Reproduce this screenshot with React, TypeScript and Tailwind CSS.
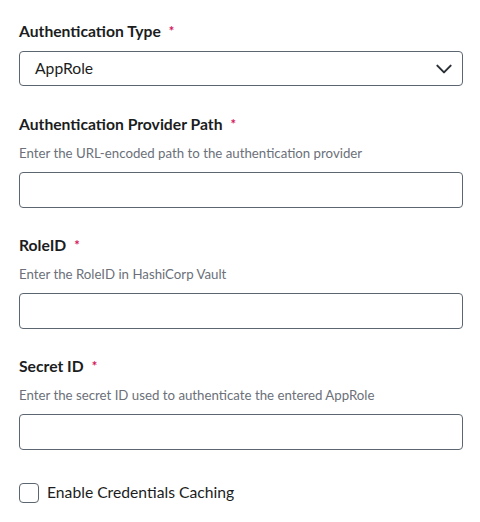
import { useState } from "react";

const font = { fontFamily: "Lato, 'Noto Sans', sans-serif" };

const Label = ({ text }: { text: string }) => (
  <div className="flex items-center text-[15.7px] font-bold leading-5 text-[#1b1d21]">
    {text}
    <span className="ml-2 text-[13px] text-[#d4145a]">*</span>
  </div>
);

const Hint = ({ text }: { text: string }) => (
  <div className="mt-[9px] text-[13.25px] leading-5 text-[#6b7079]">{text}</div>
);

const TextField = () => (
  <input
    type="text"
    className="mt-[9px] h-[36px] w-full rounded-[4px] border border-[#5c6670] bg-white px-3 text-[15px] outline-none"
  />
);

export default function App() {
  const [caching, setCaching] = useState(false);

  return (
    <div className="min-h-[522px] w-[480px] bg-white pl-[19px] pr-[17px] pt-[21px]" style={font}>
      <div>
        <Label text="Authentication Type" />
        <button className="mt-[10px] flex h-[35px] w-full items-center justify-between rounded-[4px] border border-[#5c6670] pl-[15px] pr-[8px] text-[15.7px] text-[#1b1d21]">
          <span>AppRole</span>
          <svg className="h-5 w-5" viewBox="0 0 24 24" fill="none" stroke="#2a2f36" strokeWidth={2.4} strokeLinecap="round" strokeLinejoin="round">
            <path d="M4 8l8 8 8-8" />
          </svg>
        </button>
      </div>

      <div className="mt-[28px]">
        <Label text="Authentication Provider Path" />
        <Hint text="Enter the URL-encoded path to the authentication provider" />
        <TextField />
      </div>

      <div className="mt-[27px]">
        <Label text="RoleID" />
        <Hint text="Enter the RoleID in HashiCorp Vault" />
        <TextField />
      </div>

      <div className="mt-[27px]">
        <Label text="Secret ID" />
        <Hint text="Enter the secret ID used to authenticate the entered AppRole" />
        <TextField />
      </div>

      <label className="mt-[31px] flex items-center gap-[8px] text-[15.7px] text-[#1b1d21]">
        <span
          onClick={() => setCaching(!caching)}
          className="h-[20px] w-[20px] rounded-[4px] border border-[#5c6670] bg-white"
        />
        Enable Credentials Caching
      </label>
    </div>
  );
}
